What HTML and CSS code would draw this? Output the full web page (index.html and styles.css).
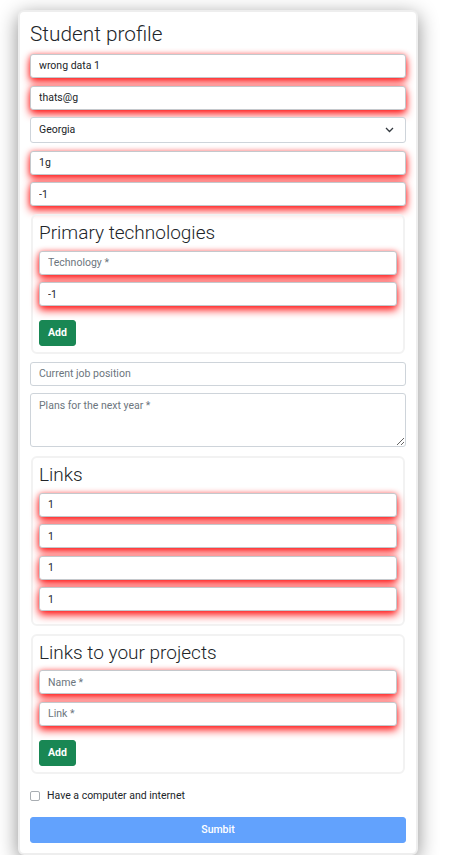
FILE: index.html
```html
<!DOCTYPE html>
<html lang="en">
<head>
<meta charset="utf-8">
<title>Student profile</title>
<link rel="stylesheet" href="styles.css">
</head>
<body>
<form class="card">
  <h1 class="title">Student profile</h1>
  <input class="field bad" type="text" value="wrong data 1">
  <input class="field bad" type="text" value="thats@g">
  <div class="select-wrap">
    <select class="field select">
      <option>Georgia</option>
    </select>
    <svg class="chev" width="9" height="6" viewBox="0 0 9 6"><path d="M1 1l3.5 3.5L8 1" fill="none" stroke="#343a40" stroke-width="1.3"/></svg>
  </div>
  <input class="field bad" type="text" value="1g">
  <input class="field bad" type="text" value="-1">

  <fieldset class="sub">
    <h2 class="sub-title">Primary technologies</h2>
    <input class="field bad" type="text" placeholder="Technology *">
    <input class="field bad" type="text" value="-1">
    <button type="button" class="btn-add">Add</button>
  </fieldset>

  <input class="field" type="text" placeholder="Current job position">
  <textarea class="field area" placeholder="Plans for the next year *"></textarea>

  <fieldset class="sub">
    <h2 class="sub-title">Links</h2>
    <input class="field bad tight" type="text" value="1">
    <input class="field bad tight" type="text" value="1">
    <input class="field bad tight" type="text" value="1">
    <input class="field bad tight last" type="text" value="1">
  </fieldset>

  <fieldset class="sub">
    <h2 class="sub-title">Links to your projects</h2>
    <input class="field bad" type="text" placeholder="Name *">
    <input class="field bad" type="text" placeholder="Link *">
    <button type="button" class="btn-add">Add</button>
  </fieldset>

  <label class="check">
    <span class="box"></span>
    <span class="check-label">Have a computer and internet</span>
  </label>

  <button type="button" class="btn-submit">Sumbit</button>
</form>
</body>
</html>
```

FILE: styles.css
```css
* { box-sizing: border-box; }

html, body {
  margin: 0;
  padding: 0;
  background: #ffffff;
}

body {
  font-family: Roboto, "Liberation Sans", Arial, sans-serif;
  color: #212529;
  padding: 10px 0 0 18px;
}

.card {
  width: 400px;
  border: 2px solid #eeeeee;
  border-radius: 6px;
  padding: 10px;
  background: #fff;
  box-shadow: 0 5px 20px rgba(0, 0, 0, 0.45);
  display: flex;
  flex-direction: column;
}

.title {
  margin: 0 0 7px;
  font-size: 20.8px;
  font-weight: 300;
  line-height: 1.2;
  color: #212529;
}

.field {
  display: block;
  width: 100%;
  height: 24px;
  margin: 0 0 7.6px;
  padding: 0 8px;
  font-family: Roboto, "Liberation Sans", Arial, sans-serif;
  font-size: 10.5px;
  color: #212529;
  background: #fff;
  border: 1px solid #ced4da;
  border-radius: 3px;
  outline: none;
}

.field::placeholder {
  color: #6c757d;
  opacity: 1;
}

.bad {
  border-color: #c4c8cc;
  box-shadow: 0 4px 8px rgba(255, 0, 0, 0.9), 0 0 5px rgba(255, 0, 0, 0.35);
}

.select-wrap {
  position: relative;
}

.select {
  -webkit-appearance: none;
  appearance: none;
  height: 25.4px;
  margin-bottom: 8px;
}

.chev {
  position: absolute;
  right: 12px;
  top: 10px;
  pointer-events: none;
}

.sub {
  margin: 0 1px 8px;
  padding: 6px;
  border: 2px solid #f2f2f2;
  border-radius: 6px;
  min-width: 0;
  display: flex;
  flex-direction: column;
}

.sub-title {
  margin: 0 0 6px;
  font-size: 19px;
  font-weight: 300;
  line-height: 1.2;
  color: #212529;
}

.tight {
  margin-bottom: 7.5px;
}

.tight.last {
  margin-bottom: 6.5px;
}

.btn-add {
  align-self: flex-start;
  margin-top: 6px;
  height: 26px;
  padding: 0 8px;
  font-family: Roboto, "Liberation Sans", Arial, sans-serif;
  font-size: 10.5px;
  font-weight: 700;
  color: #fff;
  background: #198754;
  border: 1px solid #198754;
  border-radius: 3px;
}

.area {
  height: 54px;
  padding-top: 5px;
  resize: vertical;
  margin-bottom: 8.5px;
}

.check {
  display: flex;
  align-items: center;
  gap: 7px;
  margin: 6px 0 13px;
  height: 16px;
}

.box {
  width: 10px;
  height: 10px;
  border: 1px solid #a8adb2;
  border-radius: 2px;
  background: #fff;
}

.check-label {
  font-size: 10.5px;
  color: #212529;
}

.btn-submit {
  width: 100%;
  height: 26px;
  font-family: Roboto, "Liberation Sans", Arial, sans-serif;
  font-size: 10.5px;
  font-weight: 500;
  color: #fff;
  background: #62a2fd;
  border: 1px solid #62a2fd;
  border-radius: 3px;
}
```
